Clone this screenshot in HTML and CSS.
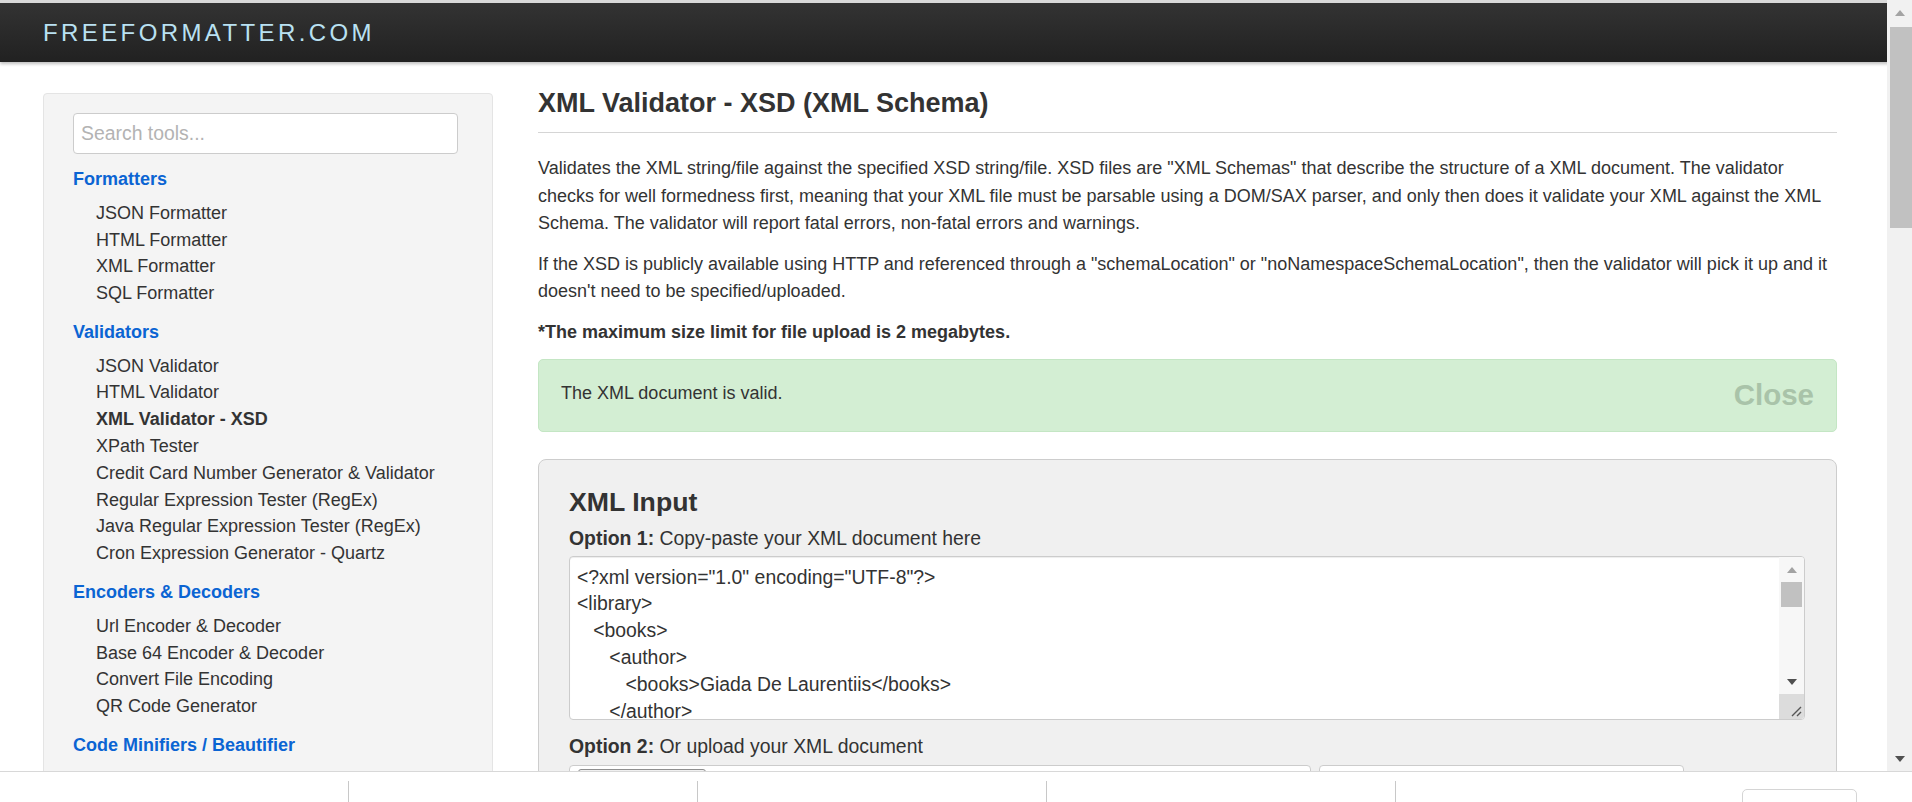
FILE: index.html
```html
<!DOCTYPE html>
<html lang="en">
<head>
<meta charset="utf-8">
<title>XML Validator - XSD (XML Schema)</title>
<link rel="stylesheet" href="styles.css">
</head>
<body>
<header class="topbar">
  <div class="logo">FREEFORMATTER.COM</div>
</header>

<div class="page">
  <aside class="sidebar">
    <input class="search" type="text" placeholder="Search tools...">
    <div class="group-title">Formatters</div>
    <ul class="tools">
      <li>JSON Formatter</li>
      <li>HTML Formatter</li>
      <li>XML Formatter</li>
      <li>SQL Formatter</li>
    </ul>
    <div class="group-title">Validators</div>
    <ul class="tools">
      <li>JSON Validator</li>
      <li>HTML Validator</li>
      <li class="active">XML Validator - XSD</li>
      <li>XPath Tester</li>
      <li>Credit Card Number Generator &amp; Validator</li>
      <li>Regular Expression Tester (RegEx)</li>
      <li>Java Regular Expression Tester (RegEx)</li>
      <li>Cron Expression Generator - Quartz</li>
    </ul>
    <div class="group-title">Encoders &amp; Decoders</div>
    <ul class="tools">
      <li>Url Encoder &amp; Decoder</li>
      <li>Base 64 Encoder &amp; Decoder</li>
      <li>Convert File Encoding</li>
      <li>QR Code Generator</li>
    </ul>
    <div class="group-title">Code Minifiers / Beautifier</div>
    <ul class="tools">
      <li>JavaScript Beautifier</li>
      <li>CSS Beautifier</li>
    </ul>
  </aside>

  <main class="content">
    <h1 class="title">XML Validator - XSD (XML Schema)</h1>
    <hr class="rule">
    <p class="text">Validates the XML string/file against the specified XSD string/file. XSD files are "XML Schemas" that describe the structure of a XML document. The validator checks for well formedness first, meaning that your XML file must be parsable using a DOM/SAX parser, and only then does it validate your XML against the XML Schema. The validator will report fatal errors, non-fatal errors and warnings.</p>
    <p class="text">If the XSD is publicly available using HTTP and referenced through a "schemaLocation" or "noNamespaceSchemaLocation", then the validator will pick it up and it doesn't need to be specified/uploaded.</p>
    <p class="text strong">*The maximum size limit for file upload is 2 megabytes.</p>

    <div class="alert">
      <span class="alert-msg">The XML document is valid.</span>
      <span class="close">Close</span>
    </div>

    <section class="panel">
      <h2 class="panel-title">XML Input</h2>
      <div class="label"><b>Option 1:</b> Copy-paste your XML document here</div>
      <div class="editor">
        <textarea class="code" spellcheck="false">&lt;?xml version="1.0" encoding="UTF-8"?&gt;
&lt;library&gt;
   &lt;books&gt;
      &lt;author&gt;
         &lt;books&gt;Giada De Laurentiis&lt;/books&gt;
      &lt;/author&gt;
   &lt;/books&gt;
&lt;/library&gt;</textarea>
        <div class="vscroll">
          <div class="vs-btn"><span class="tri-up"></span></div>
          <div class="vs-thumb"></div>
          <div class="vs-space"></div>
          <div class="vs-btn"><span class="tri-down"></span></div>
          <div class="vs-corner">
            <svg width="25" height="25" viewBox="0 0 25 25"><path d="M22 13 L13 22 M22 18 L18 22" stroke="#555" stroke-width="1.4" fill="none"/></svg>
          </div>
        </div>
      </div>
      <div class="label label-2"><b>Option 2:</b> Or upload your XML document</div>
      <div class="file-row">
        <div class="file-box"><span class="file-btn"></span></div>
        <div class="file-box file-box-2"></div>
      </div>
    </section>
  </main>
</div>

<div class="scrollbar">
  <div class="sb-btn"><span class="tri-up sb-up"></span></div>
  <div class="sb-thumb"></div>
  <div class="sb-space"></div>
  <div class="sb-btn"><span class="tri-down"></span></div>
</div>

<footer class="bottombar">
  <div class="cell"></div>
  <div class="cell"></div>
  <div class="cell"></div>
  <div class="cell"></div>
  <div class="bb-button"></div>
</footer>
</body>
</html>
```

FILE: styles.css
```css
html, body {
  margin: 0;
  padding: 0;
  height: 100%;
  overflow: hidden;
  background: #fff;
  font-family: "Liberation Sans", Arial, sans-serif;
  color: #333;
}

.topbar {
  height: 59px;
  border-top: 3px solid #d9d9d9;
  background: linear-gradient(#333333, #212121);
  box-shadow: 0 2px 3px rgba(0, 0, 0, 0.25);
  display: flex;
  align-items: center;
  padding-left: 43px;
}

.logo {
  font-size: 24px;
  letter-spacing: 3.4px;
  color: #b9e1f2;
}

.page {
  display: flex;
  align-items: flex-start;
  padding-left: 43px;
  gap: 45px;
}

/* Sidebar */
.sidebar {
  flex: 0 0 450px;
  box-sizing: border-box;
  margin-top: 31px;
  background: #f4f4f4;
  border: 1px solid #e4e4e4;
  border-radius: 4px;
  padding: 19px 34px 20px 29px;
}

.search {
  display: block;
  box-sizing: border-box;
  width: 385px;
  height: 41px;
  border: 1px solid #cccccc;
  border-radius: 4px;
  padding: 0 7px;
  font-family: "Liberation Sans", Arial, sans-serif;
  font-size: 19.4px;
  color: #555;
  background: #fff;
  margin: 0 0 4px;
  outline: none;
}
.search::placeholder { color: #b3b3b3; }

.group-title {
  margin-top: 12px;
  font-size: 18px;
  line-height: 26.78px;
  font-weight: bold;
  color: #0b64d3;
}

.tools {
  list-style: none;
  margin: 7px 0 0;
  padding: 0 0 0 23px;
}
.tools li {
  font-size: 18px;
  line-height: 26.78px;
  color: #333;
  white-space: nowrap;
}
.tools li.active { font-weight: bold; }

/* Main content */
.content {
  flex: 0 0 1299px;
  width: 1299px;
}

.title {
  margin: 26.5px 0 0;
  font-size: 27px;
  line-height: 1.1;
  font-weight: bold;
  color: #333;
}

.rule {
  margin: 14px 0 22px;
  border: 0;
  border-top: 1px solid #d5d5d5;
  height: 0;
}

.text {
  margin: 0 0 13px;
  font-size: 18px;
  line-height: 27.5px;
  color: #333;
}
.text.strong { font-weight: bold; margin-bottom: 12.5px; }

.alert {
  box-sizing: border-box;
  height: 73px;
  display: flex;
  align-items: center;
  justify-content: space-between;
  padding: 0 22px;
  background: #d3eed3;
  border: 1px solid #c4e6c4;
  border-radius: 5px;
}
.alert-msg {
  font-size: 18px;
  color: #333;
  margin-top: -4px;
}
.close {
  font-size: 29.5px;
  font-weight: bold;
  color: #a9c3a9;
}

.panel {
  margin-top: 27px;
  background: #f0f0f0;
  border: 1px solid #cdcdcd;
  border-radius: 8px;
  padding: 28px 31px 30px 30px;
}

.panel-title {
  margin: 0;
  font-size: 26.67px;
  line-height: 1.1;
  font-weight: bold;
  color: #333;
}

.label {
  margin-top: 8px;
  font-size: 19.4px;
  line-height: 27px;
  color: #333;
}
.label b { font-weight: bold; }
.label-2 { margin-top: 12.5px; }

.editor {
  margin-top: 4px;
  box-sizing: border-box;
  height: 164px;
  display: flex;
  background: #fff;
  border: 1px solid #cccccc;
  border-radius: 4px;
  box-shadow: inset 0 1px 1px rgba(0, 0, 0, 0.075);
  overflow: hidden;
}

.code {
  flex: 1;
  border: 0;
  outline: none;
  resize: none;
  overflow: hidden;
  background: transparent;
  padding: 6.5px 7px;
  margin: 0;
  font-family: "Liberation Sans", Arial, sans-serif;
  font-size: 19.4px;
  line-height: 26.8px;
  color: #333;
  white-space: pre;
}

.vscroll {
  flex: 0 0 25px;
  display: flex;
  flex-direction: column;
  background: #f7f7f7;
}
.vs-btn {
  height: 25px;
  display: flex;
  align-items: center;
  justify-content: center;
}
.vs-thumb {
  height: 25px;
  margin: 0 2px;
  background: #c1c1c1;
}
.vs-space { flex: 1; }
.vs-corner {
  height: 25px;
  background: #dcdcdc;
}
.vs-corner svg { display: block; }

.tri-up {
  width: 0;
  height: 0;
  border-left: 5px solid transparent;
  border-right: 5px solid transparent;
  border-bottom: 6px solid #a3a3a3;
}
.tri-down {
  width: 0;
  height: 0;
  border-left: 5px solid transparent;
  border-right: 5px solid transparent;
  border-top: 6px solid #505050;
}

.file-row {
  margin-top: 5px;
  display: flex;
  gap: 8px;
}
.file-box {
  box-sizing: border-box;
  width: 742px;
  height: 40px;
  background: #fff;
  border: 1px solid #cccccc;
  border-radius: 4px;
  padding: 3px 8px;
}
.file-box-2 { width: 365px; }
.file-btn {
  display: block;
  width: 126px;
  height: 30px;
  border: 1px solid #8f8f8f;
  border-radius: 3px;
  background: #efefef;
}

/* Page scrollbar */
.scrollbar {
  position: fixed;
  top: 0;
  right: 0;
  width: 25px;
  height: 771px;
  background: #f1f1f1;
  display: flex;
  flex-direction: column;
}
.sb-btn {
  height: 25px;
  display: flex;
  align-items: center;
  justify-content: center;
}
.sb-thumb {
  height: 201px;
  margin: 2px 0 0 3px;
  background: #c1c1c1;
}
.sb-space { flex: 1; }
.sb-up { border-bottom-color: #a3a3a3; }

/* Bottom bar */
.bottombar {
  position: fixed;
  left: 0;
  right: 0;
  bottom: 0;
  height: 31px;
  box-sizing: border-box;
  background: #fff;
  border-top: 1px solid #d8d8d8;
  display: flex;
  align-items: flex-start;
}
.cell {
  box-sizing: border-box;
  width: 349px;
  height: 21px;
  margin-top: 9px;
  border-right: 1px solid #c8c8c8;
}
.bb-button {
  margin-left: auto;
  margin-right: 55px;
  margin-top: 17px;
  box-sizing: border-box;
  width: 115px;
  height: 24px;
  border: 1px solid #d5d5d5;
  border-radius: 5px;
}
```
